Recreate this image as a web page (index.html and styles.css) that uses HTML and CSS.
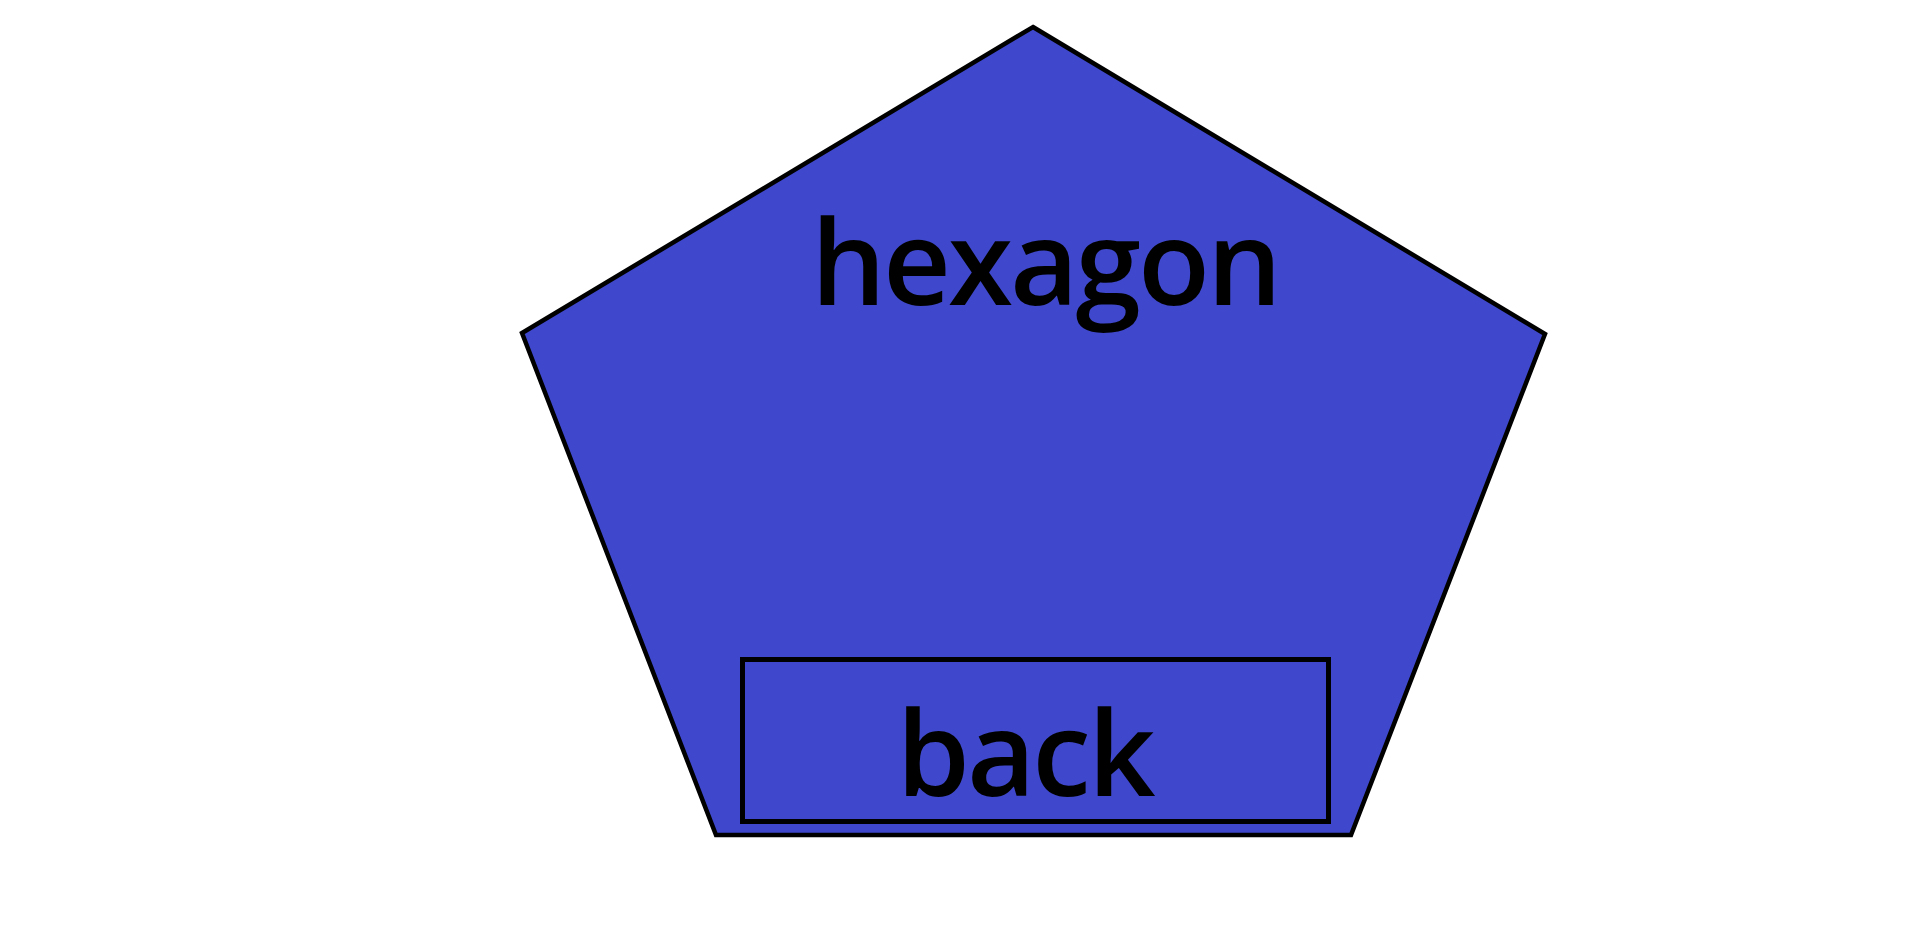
FILE: index.html
```html
<!DOCTYPE html>
<html lang="en">
<head>
    <meta charset="UTF-8">
    <meta name="viewport" content="width=device-width, initial-scale=1.0">
    <title>hexagon</title>
    <link rel="stylesheet" href="styles.css">
</head>
<body>
    <div class="stage">
        <svg class="shape" viewBox="0 0 1036 820" width="1036" height="820">
            <polygon points="517,5 1029,312 835,813 200,813 6,311" fill="#3f48cc" stroke="#000" stroke-width="4.5" stroke-linejoin="miter"/>
        </svg>
        <h1 class="title">hexagon</h1>
        <button class="back-btn" onclick="history.back()">back</button>
    </div>
</body>
</html>
```

FILE: styles.css
```css
body {
    margin: 0;
    background-color: #fff;
    font-family: 'Open Sans', 'Noto Sans', sans-serif;
    color: #000;
}
.stage {
    position: relative;
    width: 1036px;
    height: 820px;
    margin: 22px 0 0 516px;
    display: flex;
    flex-direction: column;
    align-items: center;
}
.shape {
    position: absolute;
    top: 0;
    left: 0;
}
.title {
    position: relative;
    margin: 179px 0 0 0;
    padding-left: 22px;
    font-size: 118px;
    font-weight: 600;
    letter-spacing: -3px;
    line-height: 1;
}
.back-btn {
    position: relative;
    margin-top: 338px;
    box-sizing: border-box;
    width: 591px;
    height: 167px;
    padding: 20px 22px 0 0;
    border: 5px solid #000;
    background: #3f48cc;
    color: #000;
    font-family: inherit;
    font-size: 118px;
    font-weight: 600;
    letter-spacing: -3px;
    line-height: 1;
    text-align: center;
    align-self: flex-start;
    margin-left: 224px;
    cursor: pointer;
}
```
